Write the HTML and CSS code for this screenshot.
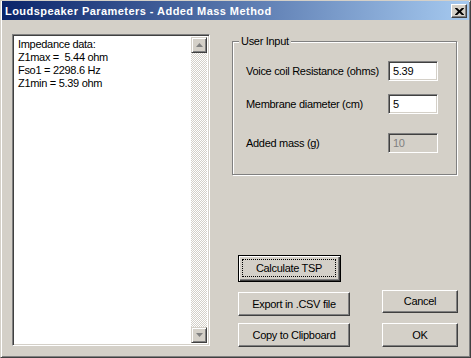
FILE: index.html
```html
<!DOCTYPE html>
<html>
<head>
<meta charset="utf-8">
<link rel="stylesheet" href="styles.css">
</head>
<body>
<div class="window">
  <div class="titlebar">
    <span class="title">Loudspeaker Parameters - Added Mass Method</span>
    <button class="close" aria-label="Close">
      <svg width="9" height="7" viewBox="0 0 9 7"><path d="M0 0h2.2l2.3 2.2L6.8 0H9v.6L6 3.5 9 6.4V7H6.8L4.5 4.8 2.2 7H0v-.6l3-2.9L0 .6z" fill="#000"/></svg>
    </button>
  </div>
  <div class="client">
    <div class="memo">
      <div class="memo-text">Impedance data:<br>Z1max =&nbsp; 5.44 ohm<br>Fso1 = 2298.6 Hz<br>Z1min = 5.39 ohm</div>
      <div class="vscroll">
        <div class="sbtn"><svg width="7" height="4" viewBox="0 0 7 4"><path d="M3.5 0L7 4H0z" fill="#808080"/></svg></div>
        <div class="track"></div>
        <div class="sbtn"><svg width="7" height="4" viewBox="0 0 7 4"><path d="M0 0h7L3.5 4z" fill="#808080"/></svg></div>
      </div>
    </div>
    <div class="side">
      <div class="group">
        <div class="group-title">User Input</div>
        <div class="row r1">
          <span class="lbl">Voice coil Resistance (ohms)</span>
          <div class="field">5.39</div>
        </div>
        <div class="row r2">
          <span class="lbl">Membrane diameter (cm)</span>
          <div class="field">5</div>
        </div>
        <div class="row r3">
          <span class="lbl">Added mass (g)</span>
          <div class="field disabled">10</div>
        </div>
      </div>
      <div class="buttons">
        <div class="col-left">
          <div class="btn default"><span class="focus">Calculate TSP</span></div>
          <div class="btn wide b-export">Export in .CSV file</div>
          <div class="btn wide b-copy">Copy to Clipboard</div>
        </div>
        <div class="col-right">
          <div class="btn small b-cancel">Cancel</div>
          <div class="btn small b-ok">OK</div>
        </div>
      </div>
    </div>
  </div>
</div>
</body>
</html>
```

FILE: styles.css
```css
* { box-sizing: border-box; }
html, body { margin: 0; padding: 0; background: #d4d0c8; }
body { font-family: "Liberation Sans", Arial, sans-serif; font-size: 11px; letter-spacing: -0.3px; color: #000; }

.window {
  width: 471px;
  height: 358px;
  background: #d4d0c8;
  border: 1px solid;
  border-color: #d4d0c8 #404040 #404040 #d4d0c8;
  box-shadow: inset 1px 1px 0 #fff, inset -1px -1px 0 #808080;
  padding: 0 1px 1px 1px;
  display: flex;
  flex-direction: column;
}

.titlebar {
  height: 19px;
  background: linear-gradient(to right, #0a246a, #a6caf0);
  display: flex;
  align-items: center;
  padding: 0 2px 0 3px;
  flex: none;
}
.title {
  color: #fff;
  font-weight: bold;
  font-size: 11px;
  letter-spacing: 0.45px;
  flex: 1;
  white-space: nowrap;
}
.close {
  width: 16px;
  height: 14px;
  padding: 0;
  margin: 0;
  background: #d4d0c8;
  border: 1px solid;
  border-color: #fff #404040 #404040 #fff;
  box-shadow: inset -1px -1px 0 #808080;
  display: flex;
  align-items: center;
  justify-content: center;
  margin-top: 1px;
}

.client {
  flex: 1;
  display: flex;
  padding: 14px 0 0 10px;
}

.memo {
  width: 198px;
  height: 312px;
  background: #fff;
  border: 1px solid;
  border-color: #808080 #fff #fff #808080;
  box-shadow: inset 1px 1px 0 #404040, inset -1px -1px 0 #d4d0c8;
  padding: 2px;
  display: flex;
}
.memo-text {
  flex: 1;
  padding: 1px 3px;
  line-height: 13px;
}
.vscroll {
  width: 16px;
  display: flex;
  flex-direction: column;
}
.sbtn {
  height: 16px;
  background: #d4d0c8;
  border: 1px solid;
  border-color: #d4d0c8 #404040 #404040 #d4d0c8;
  box-shadow: inset 1px 1px 0 #fff, inset -1px -1px 0 #808080;
  display: flex;
  align-items: center;
  justify-content: center;
}
.track {
  flex: 1;
  background: repeating-conic-gradient(#d4d0c8 0 25%, #fff 0 50%) 0 0 / 2px 2px;
}

.side {
  margin-left: 22px;
  width: 227px;
  display: flex;
  flex-direction: column;
}
.group {
  margin-top: 7px;
  width: 225px;
  height: 134px;
  border: 1px solid #808080;
  box-shadow: inset 1px 1px 0 #fff, 1px 1px 0 #fff;
  padding: 0 0 0 13px;
}
.group-title {
  margin: -7px 0 0 -7px;
  padding: 0 2px;
  width: fit-content;
  background: #d4d0c8;
  line-height: 13px;
}
.row {
  display: flex;
  align-items: center;
  height: 20px;
}
.r1 { margin-top: 13px; }
.r2 { margin-top: 13px; }
.r3 { margin-top: 19px; }
.lbl { width: 142px; }
.field {
  width: 50px;
  height: 20px;
  background: #fff;
  border: 1px solid;
  border-color: #808080 #fff #fff #808080;
  box-shadow: inset 1px 1px 0 #404040, inset -1px -1px 0 #d4d0c8;
  padding: 3px 0 0 4px;
  line-height: 13px;
}
.field.disabled {
  background: #d4d0c8;
  color: #808080;
}

.buttons {
  margin-top: 80px;
  margin-left: 6px;
  display: flex;
}
.col-left, .col-right {
  display: flex;
  flex-direction: column;
}
.col-right { margin-left: 32px; margin-top: 35px; }
.btn {
  height: 24px;
  background: #d4d0c8;
  border: 1px solid;
  border-color: #fff #404040 #404040 #fff;
  box-shadow: inset -1px -1px 0 #808080;
  display: flex;
  align-items: center;
  justify-content: center;
  line-height: 13px;
}
.btn.default {
  width: 103px;
  height: 27px;
  border: 1px solid #000;
  box-shadow: inset 1px 1px 0 #fff, inset -1px -1px 0 #404040, inset -2px -2px 0 #808080;
}
.focus {
  flex: 1;
  align-self: stretch;
  margin: 3px 4px 4px 3px;
  border: 1px dotted #000;
  display: flex;
  align-items: center;
  justify-content: center;
}
.wide { width: 112px; }
.b-export { margin-top: 10px; }
.b-copy { margin-top: 7px; }
.small { width: 76px; height: 23px; }
.b-ok { margin-top: 10px; height: 24px; }
```
